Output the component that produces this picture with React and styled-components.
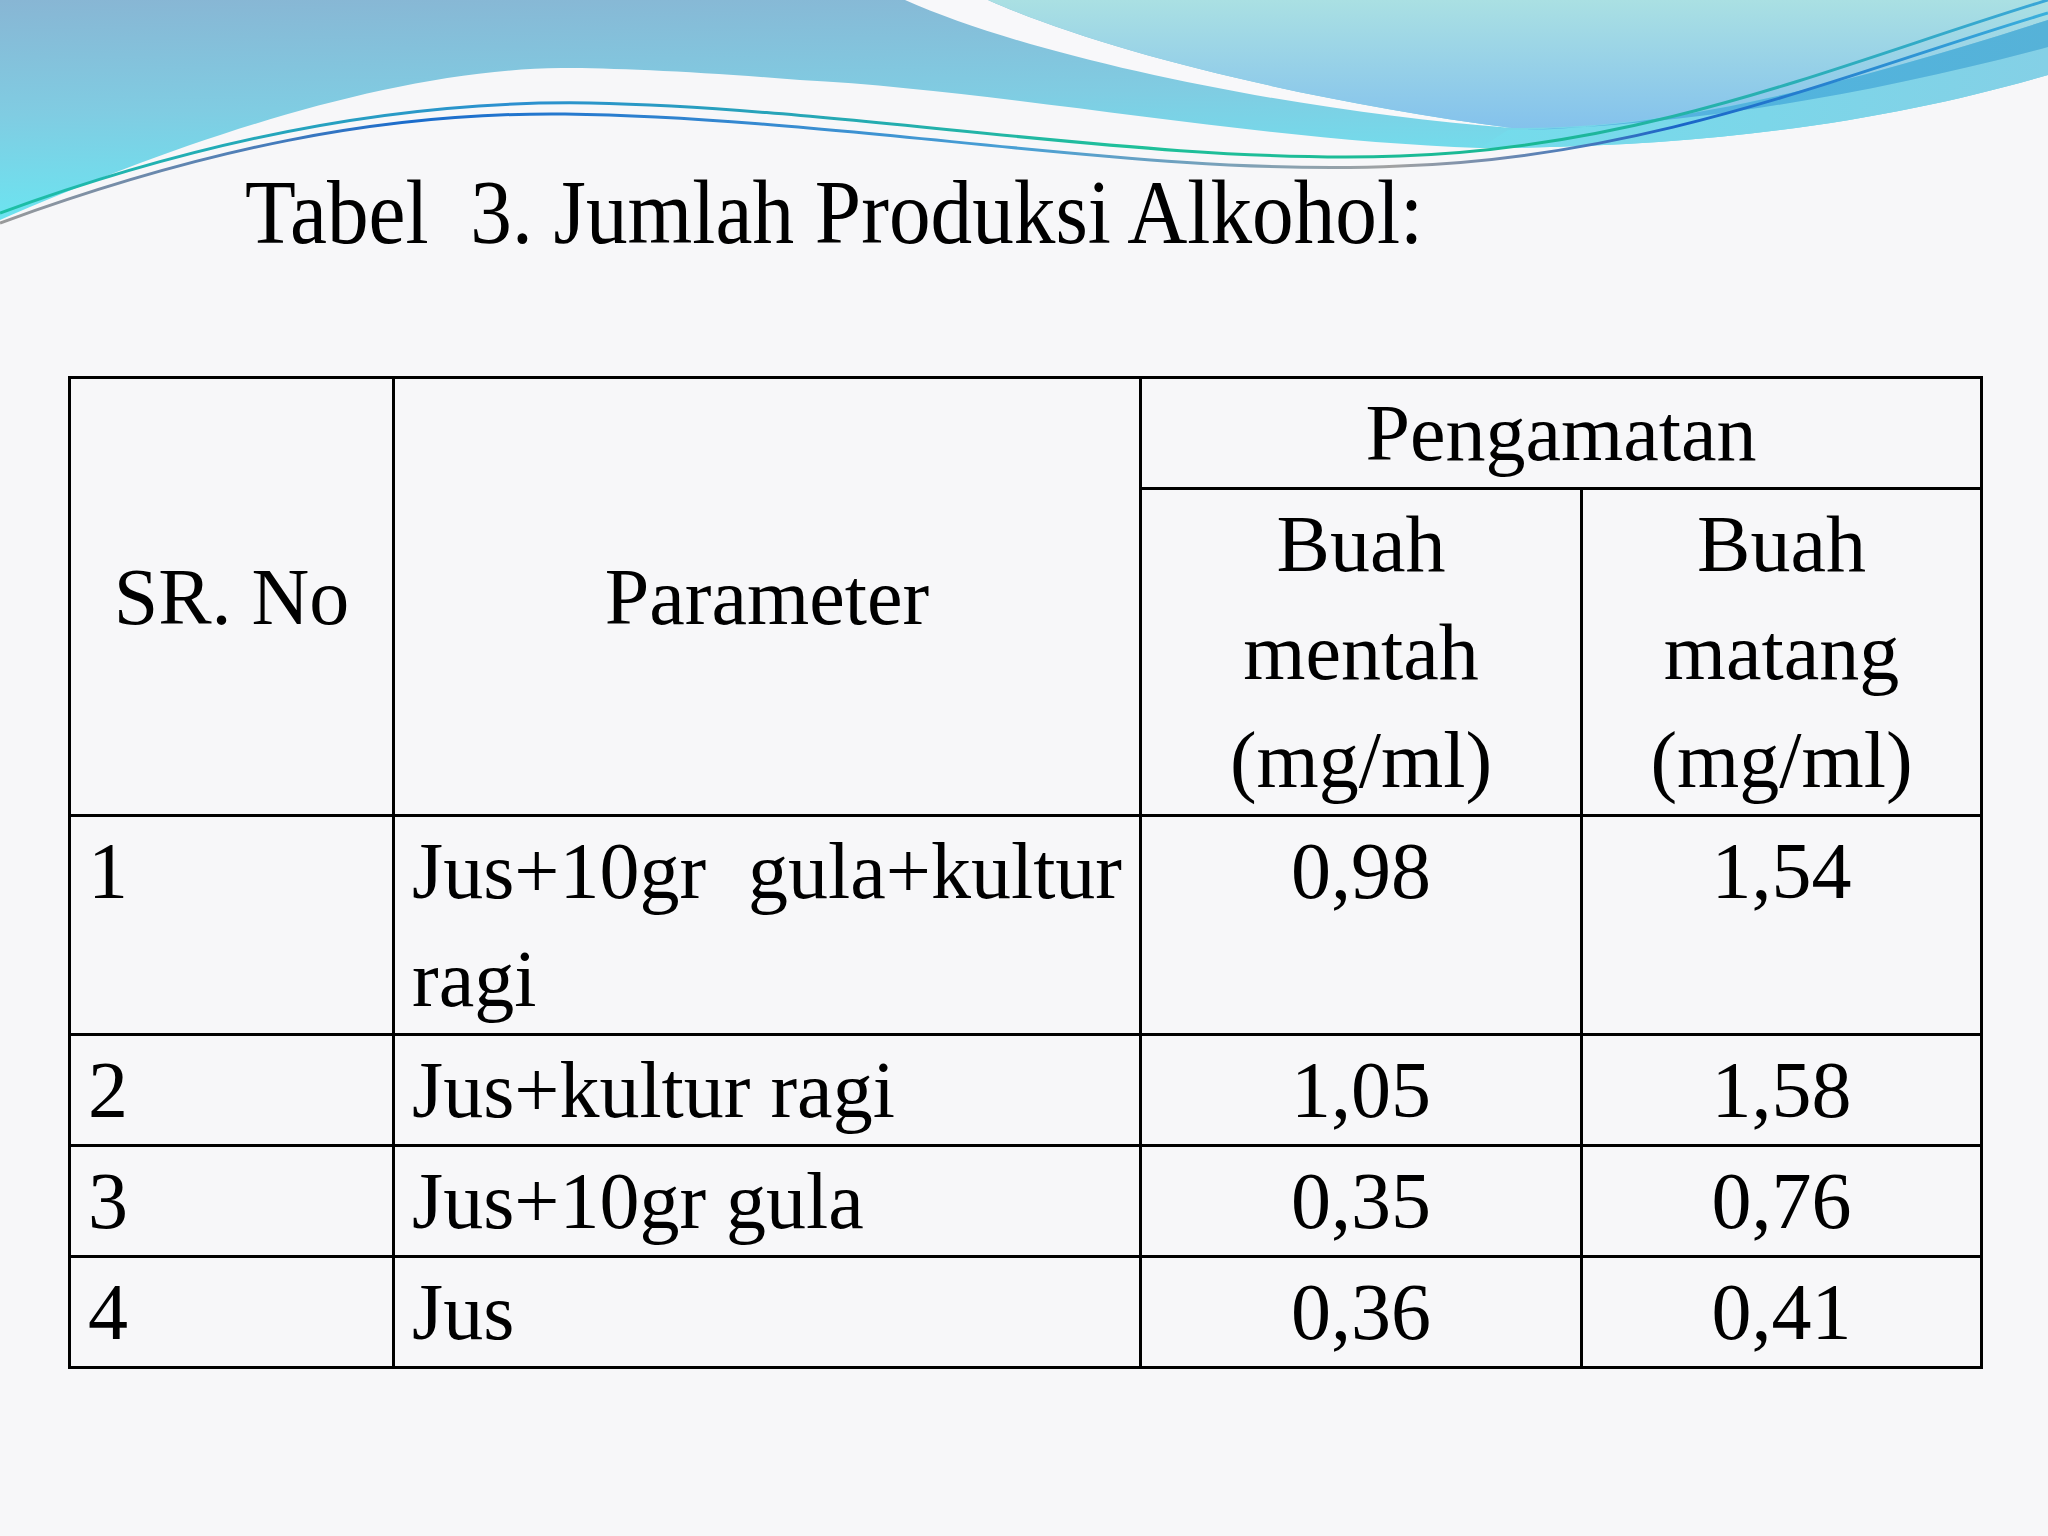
import React from "react";
import styled, { createGlobalStyle } from "styled-components";

const GlobalStyle = createGlobalStyle`
  html, body {
    margin: 0;
    padding: 0;
    background: #f7f7f9;
  }
`;

const Page = styled.div`
  position: relative;
  width: 2048px;
  height: 1536px;
  overflow: hidden;
  background: #f7f7f9;
  font-family: "Liberation Serif", "Times New Roman", serif;
  color: #000;
  display: flex;
  flex-direction: column;
`;

const Waves = styled.svg`
  position: absolute;
  top: 0;
  left: 0;
  width: 2048px;
  height: 260px;
  z-index: 0;
`;

const Content = styled.div`
  position: relative;
  z-index: 1;
  display: flex;
  flex-direction: column;
  padding: 163px 0 0 68px;
`;

const Title = styled.h1`
  margin: 0 0 0 177px;
  font-size: 90px;
  line-height: 100px;
  font-weight: normal;
  white-space: pre;
  transform: scaleX(0.925);
  transform-origin: left center;
`;

const Table = styled.table`
  margin-top: 113px;
  border-collapse: collapse;
  table-layout: fixed;
  width: 1912px;
  font-size: 80px;
  line-height: 108px;
`;

const Cell = styled.td`
  border: 3px solid #000;
  padding: 0 17px;
  vertical-align: ${(p) => (p.$middle ? "middle" : "top")};
  text-align: ${(p) => p.$align || "left"};
  font-weight: normal;
`;

const Head = styled(Cell).attrs({ as: "th" })``;

const Wave = () => (
  <Waves viewBox="0 0 2048 260" preserveAspectRatio="none">
    <defs>
      <linearGradient id="baseFill" x1="0" y1="0" x2="0.2" y2="1">
        <stop offset="0" stopColor="#88b6d4" />
        <stop offset="0.5" stopColor="#80cce2" />
        <stop offset="1" stopColor="#6ae6f2" />
      </linearGradient>
      <linearGradient id="lightFill" x1="0" y1="0" x2="0" y2="1">
        <stop offset="0" stopColor="#aae0e3" />
        <stop offset="1" stopColor="#84c2ec" />
      </linearGradient>
      <linearGradient id="bandFill" x1="0" y1="0" x2="1" y2="0">
        <stop offset="0" stopColor="#5aaee2" />
        <stop offset="0.5" stopColor="#52b4de" />
        <stop offset="1" stopColor="#56b2d8" />
      </linearGradient>
      <linearGradient id="cyanBand" x1="0" y1="0" x2="1" y2="0">
        <stop offset="0" stopColor="#74dcec" />
        <stop offset="1" stopColor="#84d0e6" />
      </linearGradient>
      <linearGradient id="lineA" x1="0" y1="0" x2="1" y2="0">
        <stop offset="0" stopColor="#1cc0a4" />
        <stop offset="0.25" stopColor="#2c8fd0" />
        <stop offset="0.55" stopColor="#1fc09a" />
        <stop offset="0.75" stopColor="#1ab894" />
        <stop offset="1" stopColor="#3aa6d8" />
      </linearGradient>
      <linearGradient id="lineB" x1="0" y1="0" x2="1" y2="0">
        <stop offset="0" stopColor="#9a9a9a" />
        <stop offset="0.2" stopColor="#1a6ccc" />
        <stop offset="0.5" stopColor="#4aa0d4" />
        <stop offset="0.68" stopColor="#a2a2a2" />
        <stop offset="0.82" stopColor="#1a64c8" />
        <stop offset="1" stopColor="#3ab0dc" />
      </linearGradient>
    </defs>
    <path
      d="M0,0 H2048 V75 C1900,118 1720,148 1480,148 C1250,140 1000,90 800,80 C700,72 620,68 561,68 C380,70 160,150 0,220 Z"
      fill="url(#baseFill)"
    />
    <path
      d="M1480,148 C1720,148 1900,118 2048,75 V47 C1850,100 1660,128 1508,130 Z"
      fill="url(#cyanBand)"
    />
    <path
      d="M905,0 C1040,60 1300,112 1512,128 C1300,100 1100,50 988,0 Z"
      fill="#f8f8fa"
    />
    <path
      d="M988,0 C1100,50 1300,100 1512,128 C1660,130 1830,90 2048,20 V0 Z"
      fill="url(#lightFill)"
    />
    <path
      d="M1508,130 C1660,130 1830,90 2048,20 V47 C1850,100 1660,128 1508,130 Z"
      fill="url(#bandFill)"
    />
    <path
      d="M0,213 C200,140 400,100 590,103 C850,108 1150,165 1400,156 C1650,148 1850,60 2048,0"
      fill="none"
      stroke="url(#lineA)"
      strokeWidth="3"
    />
    <path
      d="M0,223 C200,150 380,112 565,114 C850,118 1150,178 1400,166 C1650,158 1850,72 2048,13"
      fill="none"
      stroke="url(#lineB)"
      strokeWidth="3"
    />
  </Waves>
);

const rows = [
  { no: "1", param: "Jus+10gr gula+kultur ragi", raw: "0,98", ripe: "1,54" },
  { no: "2", param: "Jus+kultur ragi", raw: "1,05", ripe: "1,58" },
  { no: "3", param: "Jus+10gr gula", raw: "0,35", ripe: "0,76" },
  { no: "4", param: "Jus", raw: "0,36", ripe: "0,41" },
];

const App = () => (
  <Page>
    <GlobalStyle />
    <Wave />
    <Content>
      <Title>Tabel  3. Jumlah Produksi Alkohol:</Title>
      <Table>
        <colgroup>
          <col style={{ width: 324 }} />
          <col style={{ width: 747 }} />
          <col style={{ width: 441 }} />
          <col style={{ width: 400 }} />
        </colgroup>
        <thead>
          <tr>
            <Head rowSpan={2} $middle $align="center">
              SR. No
            </Head>
            <Head rowSpan={2} $middle $align="center">
              Parameter
            </Head>
            <Head colSpan={2} $align="center">
              Pengamatan
            </Head>
          </tr>
          <tr>
            <Head $align="center">
              Buah
              <br />
              mentah
              <br />
              (mg/ml)
            </Head>
            <Head $align="center">
              Buah
              <br />
              matang
              <br />
              (mg/ml)
            </Head>
          </tr>
        </thead>
        <tbody>
          {rows.map((r) => (
            <tr key={r.no}>
              <Cell>{r.no}</Cell>
              <Cell $align="justify">{r.param}</Cell>
              <Cell $align="center">{r.raw}</Cell>
              <Cell $align="center">{r.ripe}</Cell>
            </tr>
          ))}
        </tbody>
      </Table>
    </Content>
  </Page>
);

export default App;
